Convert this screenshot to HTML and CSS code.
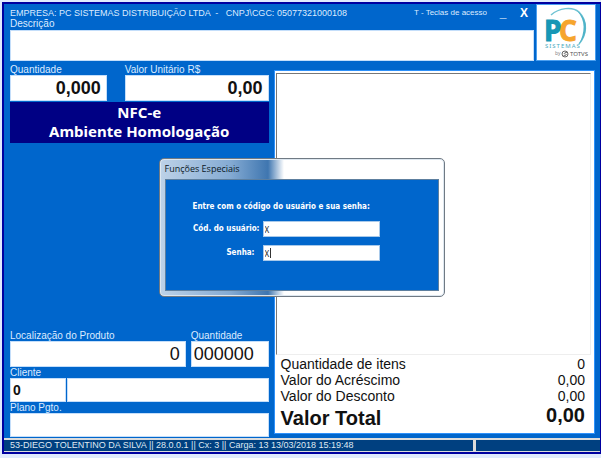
FILE: index.html
```html
<!DOCTYPE html>
<html lang="pt-BR">
<head>
<meta charset="utf-8">
<title>NFC-e - Frente de Caixa</title>
<link rel="stylesheet" href="styles.css">
</head>
<body>
<div class="window">
  <header class="header">
    <div class="header-main">
      <div class="title-row">
        <span class="company">EMPRESA: PC SISTEMAS DISTRIBUIÇÃO LTDA &nbsp;- &nbsp; CNPJ\CGC: 05077321000108</span>
        <span class="shortcut">T - Teclas de acesso</span>
        <button class="win-btn" type="button">_</button>
        <button class="win-btn" type="button">X</button>
      </div>
      <label class="label" for="descricao">Descrição</label>
      <input class="field description" id="descricao" type="text">
    </div>
    <div class="logo">
      <svg viewBox="0 0 58 55" role="img">
        <path d="M14 10C22 3 35 1 42 7C52 17 49 31 42 39" fill="none" stroke="#6fc3d3" stroke-width="1.500"/>
        <path d="M40 6C52 14 51 30 42 39C48 28 49 15 40 6Z" fill="#4fb3c8"/>
        <text class="logo-p" x="7" y="36">P</text>
        <text class="logo-c" x="22" y="36">C</text>
        <text class="logo-sub" x="8" y="43">SISTEMAS</text>
        <text class="logo-by" x="18" y="50">by</text>
        <circle cx="28" cy="49" r="3" fill="none" stroke="#666" stroke-width="1"/>
        <path d="M30 47.500H28L27 48.500L29.500 49.500L28.500 50.500H26.500" fill="none" stroke="#666" stroke-width=".8"/>
        <text class="logo-totvs" x="33" y="51">TOTVS</text>
      </svg>
    </div>
  </header>

  <main class="main">
    <section class="left">
      <div class="row row-price">
        <div class="cell"><label class="label" for="qtd">Quantidade</label><input class="field amount" id="qtd" type="text" value="0,000"></div>
        <div class="cell"><label class="label" for="valor">Valor Unitário R$</label><input class="field amount" id="valor" type="text" value="0,00"></div>
      </div>
      <div class="banner">NFC-e<br>Ambiente Homologação</div>
      <div class="row row-stock">
        <div class="cell"><label class="label" for="local">Localização do Produto</label><input class="field stock right" id="local" type="text" value="0"></div>
        <div class="cell"><label class="label" for="estoque">Quantidade</label><input class="field stock" id="estoque" type="text" value="000000"></div>
      </div>
      <label class="label" id="cliente-label" for="cliente">Cliente</label>
      <div class="row row-client">
        <input class="field client" id="cliente" type="text" value="0">
        <input class="field client" type="text" aria-labelledby="cliente-label">
      </div>
      <label class="label" for="plano">Plano Pgto.</label>
      <input class="field client" id="plano" type="text">
    </section>

    <section class="receipt">
      <div class="items"></div>
      <dl class="totals">
        <div class="total"><dt>Quantidade de itens</dt><dd>0</dd></div>
        <div class="total"><dt>Valor do Acréscimo</dt><dd>0,00</dd></div>
        <div class="total"><dt>Valor do Desconto</dt><dd>0,00</dd></div>
        <div class="total grand"><dt>Valor Total</dt><dd>0,00</dd></div>
      </dl>
    </section>
  </main>

  <footer class="status">
    <div class="status-text">53-DIEGO TOLENTINO DA SILVA || 28.0.0.1 || Cx: 3 || Carga: 13 13/03/2018 15:19:48</div>
    <div class="status-text"></div>
  </footer>
</div>

<div class="dialog" role="dialog" aria-labelledby="dialog-title">
  <div class="dialog-title" id="dialog-title">Funções Especiais</div>
  <form class="dialog-body">
    <p class="prompt">Entre com o código do usuário e sua senha:</p>
    <label class="dialog-label" for="usuario">Cód. do usuário:</label>
    <input class="dialog-input" id="usuario" type="text" value="X">
    <label class="dialog-label short" for="senha">Senha:</label>
    <input class="dialog-input active" id="senha" type="text" value="X">
  </form>
</div>
</body>
</html>
```
FILE: styles.css
```css
* { box-sizing: border-box; }

body {
  margin: 0;
  min-height: 100vh;
  display: flex;
  padding: 2px 0 4px 2px;
  background: #e0ebfd;
  font-family: "Liberation Sans", Arial, sans-serif;
  color: #111;
}

.window {
  flex: 1;
  min-width: 0;
  display: flex;
  flex-direction: column;
  border: 2px solid #0000a0;
  border-right-width: 1px;
  background: #0066cc;
}

.header {
  display: flex;
  gap: 3px;
  padding: 1px 5px 0 6px;
}

.header-main {
  flex: 1;
  min-width: 0;
  display: flex;
  flex-direction: column;
}

.title-row {
  display: flex;
  align-items: center;
  height: 12px;
  margin-top: 2px;
  padding-right: 5px;
  color: #dcebff;
  white-space: nowrap;
}

.company { flex: 1; font-size: 9px; line-height: 12px; }
.shortcut { font-size: 8px; line-height: 12px; }

.win-btn {
  width: 10px;
  margin-left: 11px;
  padding: 0;
  border: 0;
  background: none;
  color: #fff;
  font: bold 12px/12px "Liberation Sans", Arial, sans-serif;
}

.label {
  display: block;
  color: #dcebff;
  font-size: 10px;
  line-height: 11px;
  white-space: nowrap;
}

.header .label { line-height: 10px; margin-bottom: 1px; }

.field {
  display: block;
  width: 100%;
  min-width: 0;
  margin: 0;
  padding: 0 5px 0 2px;
  border: 1px solid #c4defa;
  background: #fff;
  color: #111;
  font-family: inherit;
}

.description { height: 31px; }

.logo {
  width: 58px;
  height: 55px;
  background: #fff;
  outline: 1px solid #4a9ff0;
}

.logo svg { display: block; width: 100%; height: 100%; }
.logo-p, .logo-c { font: bold 28px "Open Sans", sans-serif; stroke-width: 1px; }
.logo-p { fill: #1797b5; stroke: #1797b5; }
.logo-c { fill: #f6a52d; stroke: #f6a52d; }
.logo-sub { font: 6px "Noto Sans", sans-serif; letter-spacing: 1px; fill: #4aa9be; }
.logo-by { font: 5px "Noto Sans", sans-serif; fill: #888; }
.logo-totvs { font: 6px "Noto Sans", sans-serif; fill: #555; }

.main {
  flex: 1;
  display: grid;
  grid-template-columns: 259fr 322fr;
  gap: 5px;
  padding: 3px 5px 1px 6px;
}

.left { display: flex; flex-direction: column; min-width: 0; }
.row { display: grid; }
.row-price { grid-template-columns: 97fr 144fr; gap: 18px; }
.row-stock { grid-template-columns: 176fr 78fr; gap: 5px; margin-top: auto; }
.row-client { grid-template-columns: 56fr 202fr; gap: 1px; }

.amount { height: 26px; font-size: 18px; font-weight: bold; text-align: right; }
.stock { height: 26px; font-size: 18px; }
.right { text-align: right; }
.client { height: 24px; font-size: 14px; font-weight: bold; }

.banner {
  margin-top: 1px;
  padding: 1px 0 2px;
  background: #000084;
  color: #fff;
  text-align: center;
  font: bold 15px/19px "Noto Sans", Tahoma, sans-serif;
}

.receipt {
  display: flex;
  flex-direction: column;
  margin: 6px 0 3px;
  border: 1px solid #2d91fb;
  background: #fff;
}

.items {
  flex: 1;
  margin: 2px 3px 0 1px;
  border: 1px solid #777;
  border-right-color: #eee;
  border-bottom-color: #eee;
}

.totals { margin: 0; padding: 1px 9px 1px 6px; }
.total { display: flex; justify-content: space-between; font-size: 14px; line-height: 16px; }
.total dd { margin: 0; }
.total.grand { font-size: 20px; font-weight: bold; line-height: 28px; }
.total.grand dd { line-height: 22px; }

.status {
  display: grid;
  grid-template-columns: 470fr 124fr;
  gap: 3px;
  padding: 2px 0 1px;
  background: #dcdcdc;
}

.status-text {
  height: 11px;
  padding-left: 6px;
  background: #004080;
  color: #dfe8f2;
  font-size: 9px;
  line-height: 11px;
  white-space: nowrap;
}

.dialog {
  position: absolute;
  top: 158px;
  left: 50%;
  width: 286px;
  margin-left: -142px;
  padding: 0 5px 5px;
  border: 1px solid #707a84;
  border-radius: 5px;
  background: linear-gradient(90deg, #bdd2e8 0, #85abd3 70px, #3f76b0 108px, #fff 124px);
  box-shadow: inset 0 0 0 1px #dde7f0;
}

.dialog-title {
  color: #0a1826;
  font: 9px/20px "Open Sans", "Segoe UI", sans-serif;
}

.dialog-body {
  display: grid;
  grid-template-columns: 69px 117px;
  gap: 8px 1px;
  align-content: start;
  height: 112px;
  padding: 21px 0 0 27px;
  border: 1px solid #5d7f9f;
  background: #0066cc;
}

.prompt, .dialog-label {
  margin: 0;
  color: #fff;
  font: bold 8px/15px "DejaVu Sans Condensed", Tahoma, sans-serif;
  white-space: nowrap;
}

.prompt { grid-column: 1 / -1; line-height: 12px; }
.dialog-label { text-align: right; padding-right: 2px; }
.dialog-label.short { padding-right: 7px; }

.dialog-input {
  width: 100%;
  height: 16px;
  padding: 0 1px;
  border: 1px solid #a8c9ea;
  background: #fff;
  color: #222;
  font: 8px "Noto Sans", Tahoma, sans-serif;
}

.active { background: linear-gradient(#333, #333) 6px 2px / 1px 10px no-repeat #fff; }
```
